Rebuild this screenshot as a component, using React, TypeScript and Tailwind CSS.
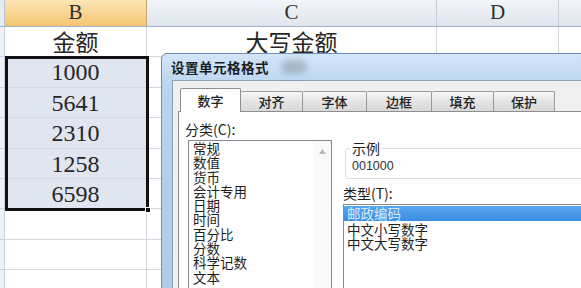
import React from "react";

const CJK = { fontFamily: '"Noto Sans CJK SC", "Noto Sans", sans-serif' };
const SERIF = { fontFamily: '"Liberation Serif", "Noto Sans CJK SC", serif' };

type Row = { h: string; b: string; c: string; sel: boolean };

const rows: Row[] = [
  { h: "h-[30px]", b: "金额", c: "大写金额", sel: false },
  { h: "h-[31px]", b: "1000", c: "", sel: true },
  { h: "h-[30px]", b: "5641", c: "", sel: true },
  { h: "h-[31px]", b: "2310", c: "", sel: true },
  { h: "h-[30px]", b: "1258", c: "", sel: true },
  { h: "h-[30px]", b: "6598", c: "", sel: true },
  { h: "h-[31px]", b: "", c: "", sel: false },
  { h: "h-[30px]", b: "", c: "", sel: false },
  { h: "h-[30px]", b: "", c: "", sel: false },
];

const tabs = [
  { t: "数字", w: "w-[61px]", sel: true },
  { t: "对齐", w: "w-[62px]", sel: false },
  { t: "字体", w: "w-[64px]", sel: false },
  { t: "边框", w: "w-[65px]", sel: false },
  { t: "填充", w: "w-[62px]", sel: false },
  { t: "保护", w: "w-[61px]", sel: false },
];

const cats = ["常规", "数值", "货币", "会计专用", "日期", "时间", "百分比", "分数", "科学记数", "文本"];

export default function App() {
  return (
    <div className="relative w-[581px] h-[288px] overflow-hidden bg-white">
      {/* header row */}
      <div className="flex h-[27px] border-b border-[#9fb3cb]">
        <div className="w-[5px] bg-[#e4ebf4] border-r border-[#b9c6d6]" />
        <div
          className="w-[142px] flex items-center justify-center bg-[linear-gradient(180deg,#fde5b6,#f3c570)] border-r border-[#c9a466] text-[21px] text-[#2f2f2f]"
          style={SERIF}
        >
          B
        </div>
        <div
          className="w-[290px] flex items-center justify-center bg-[linear-gradient(180deg,#f2f5f9,#dfe5ee)] border-r border-[#c3ceda] text-[21px] text-[#2f2f2f]"
          style={SERIF}
        >
          C
        </div>
        <div
          className="w-[122px] flex items-center justify-center bg-[linear-gradient(180deg,#f2f5f9,#dfe5ee)] border-r border-[#c3ceda] text-[21px] text-[#2f2f2f]"
          style={SERIF}
        >
          D
        </div>
        <div className="flex-1 bg-[linear-gradient(180deg,#f2f5f9,#dfe5ee)]" />
      </div>

      {/* body rows */}
      {rows.map((r, i) => (
        <div key={i} className={`flex ${r.h}`}>
          <div className="w-[5px] bg-[#eef2f7] border-r border-b border-[#c9d2de]" />
          <div
            className={`w-[142px] flex items-center justify-center border-r border-b border-[#d3d8e0] text-[#262626] ${
              r.sel ? "bg-[#e0e5f0] text-[24px]" : "bg-white text-[23px]"
            }`}
            style={r.sel ? SERIF : CJK}
          >
            {r.b}
          </div>
          <div
            className="w-[290px] flex items-center justify-center border-r border-b border-[#d3d8e0] text-[23px] text-[#262626]"
            style={CJK}
          >
            {r.c}
          </div>
          <div className="w-[122px] border-r border-b border-[#d3d8e0]" />
          <div className="flex-1 border-b border-[#d3d8e0]" />
        </div>
      ))}

      {/* selection border */}
      <div className="absolute left-[5px] top-[56px] w-[144px] h-[155px] border-[3px] border-[#111]" />
      <div className="absolute left-[145px] top-[207px] w-[6px] h-[6px] bg-[#111] border border-white" />

      {/* dialog */}
      <div className="absolute left-[161px] top-[53px] w-[440px] h-[250px] flex flex-col border border-[#6f8db5] rounded-tl-[6px] bg-[linear-gradient(180deg,#d3e6f8,#b9d4f0_34px,#b3cfec_120px,#aecbe8)]">
        <div className="h-[33px] flex items-center pl-[9px] gap-[12px]">
          <span className="text-[13.5px] font-semibold text-[#1b1b1b] tracking-[0.5px]" style={CJK}>
            设置单元格格式
          </span>
          <span className="w-[26px] h-[14px] rounded-full bg-[#8f9cab] opacity-60 blur-[3px]" />
        </div>
        <div className="flex-1 ml-[10px] border border-[#8aa0bd] bg-[#f0f0f0] pl-[5px] pt-[7px] flex flex-col">
          {/* tabs */}
          <div className="flex items-end h-[23px] pl-[2px]" style={CJK}>
            {tabs.map((t) =>
              t.sel ? (
                <div
                  key={t.t}
                  className={`${t.w} h-[24px] -mb-px relative z-10 bg-white border-x border-t border-[#8e8e8e] rounded-t-[2px] flex items-center justify-center text-[13px] font-medium text-[#222]`}
                >
                  {t.t}
                </div>
              ) : (
                <div
                  key={t.t}
                  className={`${t.w} h-[20px] bg-[linear-gradient(180deg,#f7f7f7,#e4e4e4_50%,#d9d9d9)] border-t border-r border-[#9a9a9a] rounded-t-[2px] flex items-center justify-center text-[13px] font-medium text-[#222]`}
                >
                  {t.t}
                </div>
              )
            )}
          </div>
          {/* panel */}
          <div className="flex-1 border border-[#8e8e8e] bg-white flex text-[#1e1e1e]" style={CJK}>
            {/* left column */}
            <div className="flex flex-col pl-[6px]">
              <div className="mt-[9px] text-[14px] leading-[16px]">分类(C):</div>
              <div className="mt-[3px] ml-[3px] w-[144px] h-[160px] border border-[#828790] flex">
                <div className="flex-1 pl-[4px] text-[13.5px] leading-[14.3px]">
                  {cats.map((c) => (
                    <div key={c} className="whitespace-nowrap">
                      {c}
                    </div>
                  ))}
                </div>
                <div className="w-[17px] bg-[#fafafa] flex justify-center pt-[8px]">
                  <svg width="7" height="5" viewBox="0 0 7 5">
                    <path d="M0 5 L3.5 0 L7 5 Z" fill="#b9b9b9" />
                  </svg>
                </div>
              </div>
            </div>
            {/* right column */}
            <div className="flex-1 flex flex-col ml-[11px]">
              <fieldset className="mt-[28px] ml-[2px] border border-[#d5dfe5] rounded-[3px] pl-[6px] pt-[3px] pb-[5px]">
                <legend className="px-[2px] -ml-[2px] text-[14px] leading-[16px]">示例</legend>
                <div className="text-[12.5px] leading-[14px] text-[#333]" style={{ fontFamily: '"Liberation Sans", sans-serif' }}>
                  001000
                </div>
              </fieldset>
              <div className="mt-[6px] text-[14px] leading-[16px]">类型(T):</div>
              <div className="mt-[3px] flex-1 border-l border-t border-[#828790] pt-[1px]">
                <div className="h-[15px] bg-[linear-gradient(180deg,#56a6ee,#3a8ee0)] text-[#d6ebff] text-[13.5px] leading-[15px] pl-[3px]">
                  邮政编码
                </div>
                <div className="pl-[3px] text-[13.5px] leading-[14px] mt-[1px]">中文小写数字</div>
                <div className="pl-[3px] text-[13.5px] leading-[14px]">中文大写数字</div>
              </div>
            </div>
          </div>
        </div>
      </div>
    </div>
  );
}
